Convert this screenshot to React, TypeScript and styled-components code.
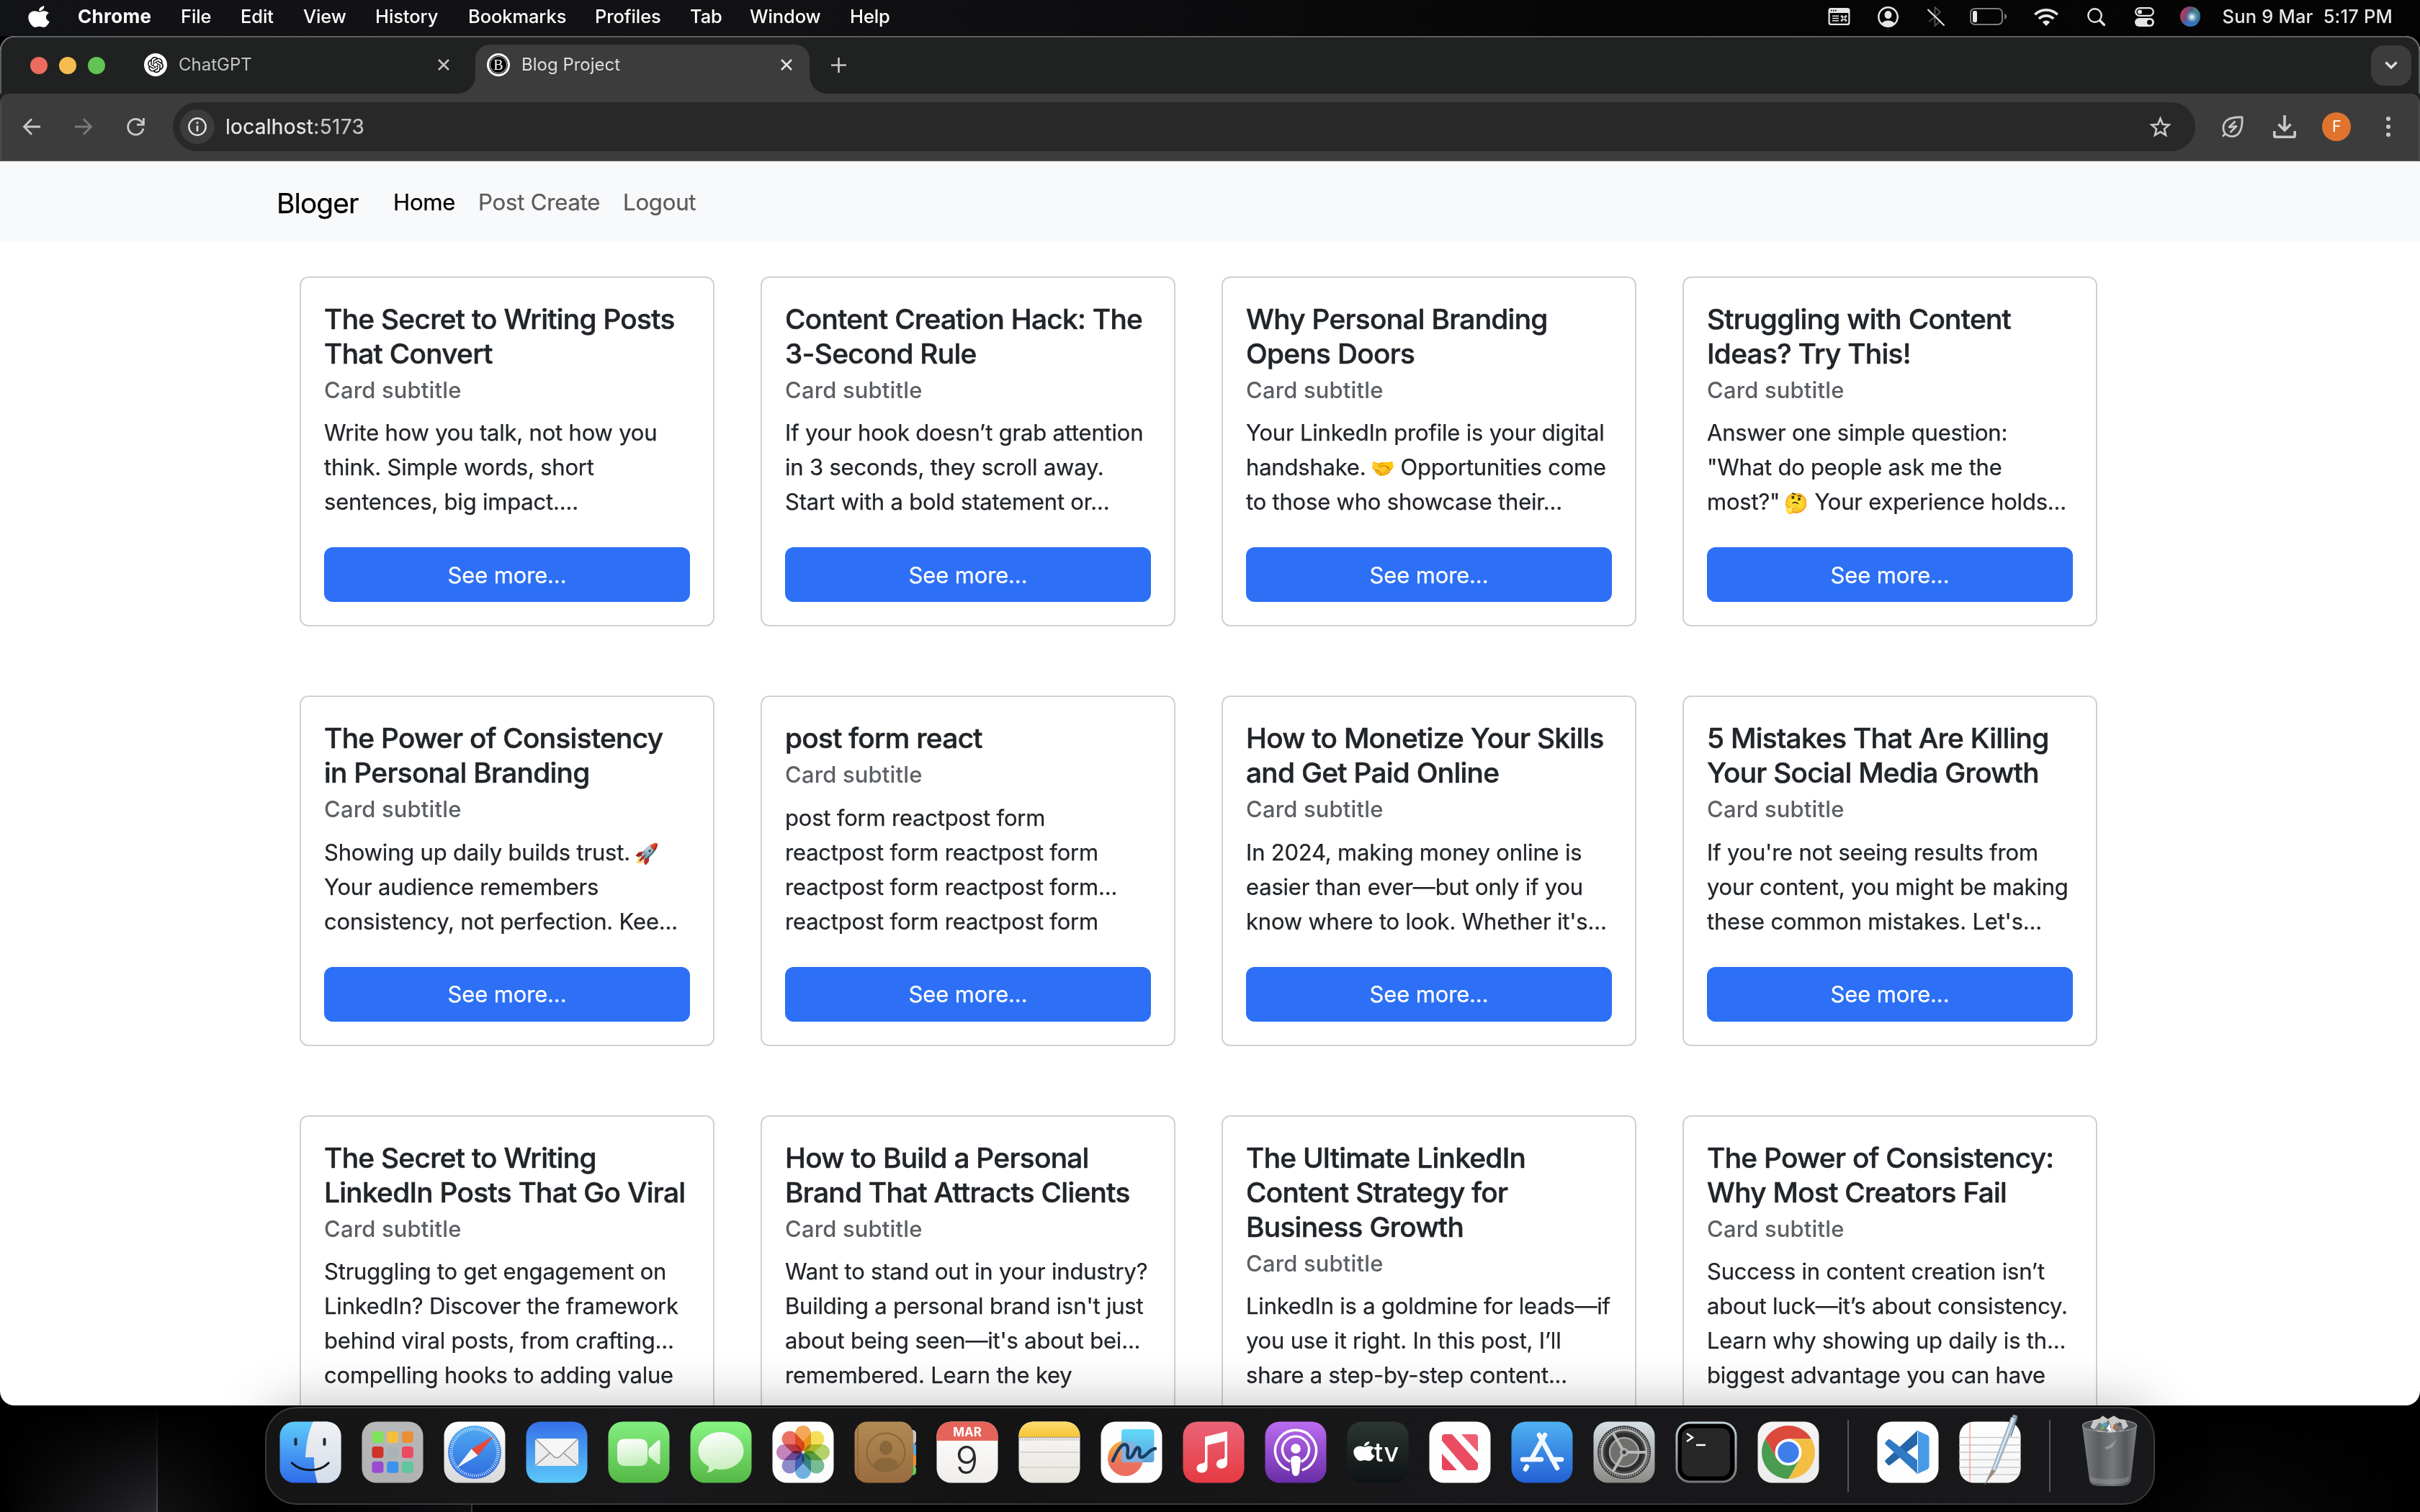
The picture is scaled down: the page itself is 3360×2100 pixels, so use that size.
import React from "react";
import styled, { createGlobalStyle } from "styled-components";
import { FaApple } from "react-icons/fa";
import { SiOpenai } from "react-icons/si";

const GlobalStyle = createGlobalStyle`
  *, *::before, *::after { box-sizing: border-box; }
  body { margin: 0; background: #000; font-family: Inter, "Liberation Sans", sans-serif; }
  h5, h6, p { margin: 0; }
  svg { display: block; flex: none; overflow: visible; }
`;

/* ---------- desktop ---------- */

const Desktop = styled.div`
  width: 3360px;
  height: 2100px;
  overflow: hidden;
  display: flex;
  flex-direction: column;
  background:
    linear-gradient(180deg, #000 0%, rgba(0, 0, 0, 0.75) 28%, rgba(0, 0, 0, 0) 100%) 0 1952px / 3360px 148px no-repeat,
    linear-gradient(#4d4d55, #4d4d55) 217px 1900px / 2px 200px no-repeat,
    linear-gradient(#43434a, #43434a) 654px 1900px / 2px 200px no-repeat,
    linear-gradient(90deg, #000 0, #26262b 217px, #121214 219px, #000 380px, #0b0b0d 560px, #101013 654px, #050506 657px, #000 900px, #000 2900px, #08080a 3100px, #000 3360px) 0 1900px / 3360px 200px no-repeat,
    #000;
`;

/* ---------- menu bar ---------- */

const MenuBar = styled.header`
  flex: none;
  height: 50px;
  display: flex;
  align-items: center;
  padding: 0 38px 4px 39px;
  color: #fff;
  background: linear-gradient(90deg, #121316 0%, #111114 35%, #060607 65%, #040404 100%);
`;
const AppleSlot = styled.div`
  width: 69px;
  display: flex;
`;
const MenuItem = styled.span<{ $w: number; $strong?: boolean }>`
  width: ${(p) => p.$w}px;
  font-size: ${(p) => (p.$strong ? 26 : 25.5)}px;
  font-weight: ${(p) => (p.$strong ? 700 : 500)};
  letter-spacing: ${(p) => (p.$strong ? 0.3 : -0.1)}px;
  line-height: 46px;
  white-space: nowrap;
`;
const StatusArea = styled.div`
  margin-left: auto;
  display: flex;
  align-items: center;
  color: #e6e6e6;
`;
const StatusIcon = styled.span<{ $after: number }>`
  display: flex;
  margin-right: ${(p) => p.$after}px;
`;
const Clock = styled.span`
  display: flex;
  gap: 14px;
  font-size: 25.5px;
  font-weight: 500;
  letter-spacing: 0.18px;
  line-height: 46px;
  white-space: pre;
`;

/* ---------- browser window ---------- */

const Window = styled.main`
  flex: none;
  width: 3360px;
  height: 1902px;
  overflow: hidden;
  display: flex;
  flex-direction: column;
  border-radius: 20px;
  background: #fff;
`;
const TabStrip = styled.div`
  flex: none;
  height: 80px;
  display: flex;
  align-items: center;
  padding: 0 10px 0 40px;
  border: 2px solid #5e5f5f;
  border-bottom: 0;
  border-radius: 20px 20px 0 0;
  background: #202221;
`;
const Lights = styled.div`
  display: flex;
  gap: 16px;
  width: 138px;
`;
const Light = styled.i<{ $c: string }>`
  width: 24px;
  height: 24px;
  border-radius: 50%;
  background: ${(p) => p.$c};
`;
const Tab = styled.div<{ $active?: boolean; $w: number }>`
  position: relative;
  align-self: flex-end;
  width: ${(p) => p.$w}px;
  height: 68px;
  display: flex;
  align-items: center;
  padding: 0 ${(p) => (p.$active ? 24 : 36)}px 12px ${(p) => (p.$active ? 16 : 20)}px;
  border-radius: 20px 20px 0 0;
  background: ${(p) => (p.$active ? "#3c3c3c" : "transparent")};
  color: ${(p) => (p.$active ? "#dedede" : "#c4c5c5")};
  &::before,
  &::after {
    content: "";
    display: ${(p) => (p.$active ? "block" : "none")};
    position: absolute;
    bottom: 0;
    width: 24px;
    height: 24px;
  }
  &::before {
    right: 100%;
    background: radial-gradient(circle at 0 0, transparent 23.5px, #3c3c3c 24px);
  }
  &::after {
    left: 100%;
    background: radial-gradient(circle at 100% 0, transparent 23.5px, #3c3c3c 24px);
  }
`;
const TabTitle = styled.span`
  flex: 1;
  margin-left: 16px;
  font-size: 24px;
  line-height: 32px;
  white-space: nowrap;
`;
const Favicon = styled.span<{ $dark?: boolean }>`
  width: 32px;
  height: 32px;
  border-radius: 50%;
  display: flex;
  align-items: center;
  justify-content: center;
  background: ${(p) => (p.$dark ? "#000" : "#fff")};
  border: ${(p) => (p.$dark ? "3px solid #fff" : "0")};
  box-shadow: ${(p) => (p.$dark ? "inset 0 0 0 1px #000, inset 0 0 0 2px #bbb" : "none")};
  color: ${(p) => (p.$dark ? "#fff" : "#000")};
  font: 20px/1 "Liberation Serif", serif;
`;
const NewTab = styled.span`
  margin-left: 30px;
  margin-bottom: 2px;
`;
const TabSearch = styled.span`
  margin-left: auto;
  width: 56px;
  height: 56px;
  border-radius: 18px;
  background: #3c3c3c;
  display: flex;
  align-items: center;
  justify-content: center;
`;
const ToolbarBack = styled.div`
  flex: none;
  background: #202221;
`;
const Toolbar = styled.div`
  height: 94px;
  display: flex;
  align-items: center;
  padding: 0 37px 0 30px;
  background: #3c3c3c;
  border-radius: 14px 14px 0 0;
  border: 2px solid #4a4a4a;
  border-top: 0;
  color: #c9c9c9;
`;
const NavButtons = styled.div`
  display: flex;
  align-items: center;
  gap: 48px;
  width: 208px;
`;
const Omnibox = styled.div`
  width: 2808px;
  height: 68px;
  border-radius: 34px;
  background: #282828;
  display: flex;
  align-items: center;
  padding: 0 33px 0 10px;
`;
const SiteInfo = styled.span`
  width: 48px;
  height: 48px;
  border-radius: 50%;
  background: #3c3c3c;
  display: flex;
  align-items: center;
  justify-content: center;
`;
const Address = styled.span`
  flex: 1;
  margin-left: 15px;
  font-size: 28px;
  letter-spacing: 0.3px;
  -webkit-text-stroke: 0.25px;
  color: #e6e6e6;
  em { font-style: normal; color: #c4c4c4; }
`;
const ToolbarActions = styled.div`
  flex: 1;
  display: flex;
  align-items: center;
  padding-left: 37px;
`;
const Avatar = styled.span`
  width: 40px;
  height: 40px;
  margin: 0 49px 0 36px;
  border-radius: 50%;
  background: #e0742e;
  color: #fff;
  font: 22px/40px Roboto, sans-serif;
  text-align: center;
`;
const Gap = styled.span<{ $l: number }>`
  margin-left: ${(p) => p.$l}px;
`;

/* ---------- page ---------- */

const Navbar = styled.nav`
  flex: none;
  height: 112px;
  display: flex;
  align-items: center;
  padding: 2px 384px 0;
  background: #f8f9fb;
`;
const Brand = styled.span`
  width: 162px;
  font-size: 38.8px;
  letter-spacing: -0.9px;
  -webkit-text-stroke: 0.25px;
  color: #000;
`;
const NavLink = styled.span<{ $active?: boolean; $w: number }>`
  width: ${(p) => p.$w}px;
  font-size: 31.2px;
  letter-spacing: ${(p) => (p.$active ? -0.3 : -0.25)}px;
  -webkit-text-stroke: 0.25px;
  color: ${(p) => (p.$active ? "#000" : "#5b5b5c")};
`;
const Grid = styled.section`
  flex: 1;
  min-height: 0;
  display: grid;
  grid-template-columns: repeat(4, 576px);
  grid-auto-rows: 486.4px;
  column-gap: 64px;
  row-gap: 96px;
  padding: 48px 416px 0;
`;
const Card = styled.article`
  border: 2px solid #d0d1d2;
  border-radius: 12px;
  padding: 33px 32px 32px;
  display: flex;
  flex-direction: column;
  background: #fff;
  color: #212529;
`;
const CardTitle = styled.h5`
  margin-bottom: 16px;
  font-size: 38.8px;
  font-weight: 500;
  line-height: 48px;
  letter-spacing: -0.7px;
  -webkit-text-stroke: 0.5px;
  span { display: block; white-space: nowrap; }
`;
const CardSubtitle = styled.h6`
  margin: -8px 0 16px;
  font-size: 31px;
  font-weight: 500;
  line-height: 38.4px;
  letter-spacing: 0.15px;
  color: #5c6064;
`;
const CardText = styled.p`
  font-size: 31px;
  line-height: 48px;
  letter-spacing: -0.2px;
  -webkit-text-stroke: 0.25px;
  margin-bottom: 31px;
  flex: 1;
  span { display: block; height: 48px; white-space: nowrap; }
`;
const Emoji = styled.i`
  display: inline-block;
  width: 33px;
  margin-left: -2px;
  font: normal 27px/1 "Noto Color Emoji", sans-serif;
  letter-spacing: 0;
`;
const SeeMore = styled.button`
  flex: none;
  height: 76px;
  padding: 1px 0 0;
  border: 0;
  border-radius: 12px;
  background: #2d70f5;
  color: #fff;
  font: 400 31px/48px Inter, sans-serif;
  letter-spacing: -0.15px;
  -webkit-text-stroke: 0.25px;
`;

/* ---------- dock ---------- */

const DockArea = styled.footer`
  flex: none;
  height: 148px;
  display: flex;
  justify-content: center;
  padding-top: 2px;
`;
const Dock = styled.div`
  position: relative;
  height: 136px;
  display: flex;
  gap: 28px;
  padding: 18px;
  border: 2px solid #3b3b3d;
  border-radius: 44px;
  background: linear-gradient(90deg, #151515, #19191b 20%, #141415 38%, #18181a 60%, #19191b);
  box-shadow: 0 0 74px rgba(0, 0, 0, 0.28);
`;
const DockSlot = styled.div<{ $running?: boolean }>`
  width: 86px;
  display: flex;
  flex-direction: column;
  align-items: center;
  gap: 18px;
  &::after {
    content: "";
    width: 8px;
    height: 8px;
    border-radius: 50%;
    background: ${(p) => (p.$running ? "#8f8f90" : "transparent")};
  }
`;
const DockDivider = styled.i`
  width: 2px;
  height: 100px;
  margin: -2px 11px 0;
  background: #57575a;
`;

/* ---------- dock icons ---------- */

const Tile = ({ id, from, to, children }: { id: string; from: string; to: string; children?: React.ReactNode }) => (
  <svg width="86" height="86" viewBox="0 0 86 86">
    <defs>
      <linearGradient id={id} x1="0" y1="0" x2="0" y2="1">
        <stop offset="0" stopColor={from} />
        <stop offset="1" stopColor={to} />
      </linearGradient>
      <clipPath id={id + "Clip"}>
        <rect x="0.5" y="0.5" width="85" height="85" rx="20" />
      </clipPath>
    </defs>
    <rect x="0.5" y="0.5" width="85" height="85" rx="20" fill={`url(#${id})`} />
    {children}
  </svg>
);

const Finder = () => (
  <Tile id="finder" from="#5ecbfa" to="#2f6bea">
    <defs>
      <linearGradient id="finderFace" x1="0" y1="0" x2="0" y2="1">
        <stop offset="0" stopColor="#f2f2f4" />
        <stop offset="1" stopColor="#d3dce8" />
      </linearGradient>
    </defs>
    <g clipPath="url(#finderClip)">
      <path d="M47 0C40 15 37 32 36 50h12c0 13 1 25 5 36h33V0z" fill="url(#finderFace)" />
    </g>
    <path d="M22.5 25v7M62.5 25v7" stroke="#1d2a3c" strokeWidth="4" strokeLinecap="round" />
    <path d="M17.500 58C30 71 56 71 68 58" fill="none" stroke="#10151d" strokeWidth="3.200" strokeLinecap="round" />
  </Tile>
);
const Launchpad = () => (
  <Tile id="launchpad" from="#b7b8ba" to="#b0b1b3">
    {["#7fe35a", "#f5bf3c", "#ea8f35", "#cf3328", "#a9b3b8", "#ea4b63", "#9a4bd0", "#3a93ee", "#60c6a0"].map((c, i) => (
      <rect key={c} x={14.500 + (i % 3) * 20.700} y={14 + Math.floor(i / 3) * 20.900} width="16" height="16" rx="4" fill={c} />
    ))}
  </Tile>
);
const Safari = () => (
  <Tile id="safari" from="#ffffff" to="#d9d9d9">
    <defs>
      <linearGradient id="safariDial" x1="0" y1="0" x2="0" y2="1">
        <stop offset="0" stopColor="#4fabf0" />
        <stop offset="1" stopColor="#2f6be0" />
      </linearGradient>
    </defs>
    <circle cx="43" cy="43" r="37" fill="url(#safariDial)" />
    <circle cx="43" cy="43" r="32.500" fill="none" stroke="#e4f1fc" strokeWidth="4.500" strokeDasharray="0.9 1.936" />
    <path d="M70 20L47.500 47.500 38.500 38.500z" fill="#e6493b" />
    <path d="M18 65L38.500 38.500l9 9z" fill="#f4f4f4" />
  </Tile>
);
const Mail = () => (
  <Tile id="mail" from="#3570e8" to="#5bc8fa">
    <rect x="13" y="24" width="60" height="38" rx="4" fill="#ececec" />
    <path d="M14 61l23-20M72 61L49 41" stroke="#9b9b9b" strokeWidth="1.600" />
    <path d="M14 25l23 22c4 5 8 5 12 0l23-22" fill="#f6f6f6" stroke="#9b9b9b" strokeWidth="1.600" strokeLinejoin="round" />
  </Tile>
);
const WhiteFade = ({ id }: { id: string }) => (
  <linearGradient id={id} x1="0" y1="0" x2="0.2" y2="1">
    <stop offset="0" stopColor="#fff" />
    <stop offset="1" stopColor="#c9efc0" />
  </linearGradient>
);
const FaceTime = () => (
  <Tile id="facetime" from="#82ee80" to="#56b846">
    <defs><WhiteFade id="ftFade" /></defs>
    <rect x="13" y="24.500" width="42" height="37.500" rx="9" fill="url(#ftFade)" />
    <path d="M57 38l12-11c2-1.500 3.500-.5 3.500 1.500v29c0 2-1.500 3-3.500 1.500L57 49c-1-3-1-8 0-11z" fill="url(#ftFade)" />
  </Tile>
);
const Messages = () => (
  <Tile id="messages" from="#88f583" to="#56b846">
    <defs><WhiteFade id="msgFade" /></defs>
    <path d="M43 15c18 0 31.500 11.500 31.500 26S61 67 43 67c-3 0-6-.3-8.500-1C32 69 28 71 23.500 71c2-2.500 3-5 2.500-8.500C17 58 11.500 50 11.500 41 11.500 26.500 25 15 43 15z" fill="url(#msgFade)" />
  </Tile>
);
const Petal = styled.rect`
  mix-blend-mode: multiply;
`;
const Photos = () => (
  <Tile id="photos" from="#ffffff" to="#fbfbfb">
    {["#f29a3c", "#f3dc3a", "#a9cd52", "#5fb383", "#5aa4e0", "#7b78c4", "#bb6fb0", "#ea5548"].map((c, i) => (
      <Petal key={c} x="32" y="6" width="22" height="35.500" rx="11" fill={c} opacity="0.85" transform={`rotate(${i * 45} 43 43)`} />
    ))}
  </Tile>
);
const Contacts = () => (
  <svg width="86" height="86" viewBox="0 0 86 86">
    <rect x="60" y="12" width="26" height="20" rx="5" fill="#c9c6c0" />
    <rect x="60" y="31" width="26" height="18" rx="3" fill="#4fa9e6" />
    <rect x="60" y="46" width="26" height="17" rx="3" fill="#f08f2e" />
    <rect x="60" y="61" width="26" height="14" rx="5" fill="#63cf5b" />
    <defs>
      <linearGradient id="leather" x1="0" y1="0" x2="0" y2="1">
        <stop offset="0" stopColor="#b08a54" />
        <stop offset="1" stopColor="#9a6c3f" />
      </linearGradient>
    </defs>
    <rect x="0.500" y="0.500" width="81.500" height="85" rx="18" fill="url(#leather)" />
    <path d="M5 6v74" stroke="#8b6438" strokeWidth="1.500" />
    <circle cx="44" cy="43" r="26.500" fill="none" stroke="#8a663b" strokeWidth="2" />
    <ellipse cx="44" cy="37" rx="9" ry="10" fill="#8a663b" />
    <path d="M26 62c2-8 9-11 18-11s16 3 18 11c-10 10-26 10-36 0z" fill="#8a663b" />
  </svg>
);
const Calendar = () => (
  <Tile id="calendar" from="#ffffff" to="#f0eeeb">
    <g clipPath="url(#calendarClip)"><rect width="86" height="27" fill="#e5645a" /></g>
    <text x="43" y="21" textAnchor="middle" fontSize="17" fontWeight="700" fill="#fff">MAR</text>
    <text x="42.500" y="73" textAnchor="middle" fontSize="53" fontWeight="300" fill="#2a2a2c">9</text>
  </Tile>
);
const Notes = () => (
  <Tile id="notes" from="#fbfaf8" to="#e8e5df">
    <g clipPath="url(#notesClip)">
      <defs>
        <linearGradient id="notesTop" x1="0" y1="0" x2="0" y2="1">
          <stop offset="0" stopColor="#fbdc72" />
          <stop offset="1" stopColor="#f6c435" />
        </linearGradient>
      </defs>
      <rect width="86" height="22" fill="url(#notesTop)" />
      <path d="M0 22.500h86" stroke="#a9a7a2" strokeWidth="1.500" />
      <path d="M2 25.500h82" stroke="#b8b6b2" strokeWidth="2.500" strokeDasharray="1.300 1.700" />
      <path d="M0 43h86M0 64h86" stroke="#cfcdca" strokeWidth="1.600" />
    </g>
  </Tile>
);
const Freeform = () => (
  <Tile id="freeform" from="#ffffff" to="#fdfdfd">
    <defs>
      <linearGradient id="ffOrange" x1="0" y1="0" x2="0" y2="1">
        <stop offset="0" stopColor="#f5b13a" />
        <stop offset="0.7" stopColor="#ec6f5e" />
      </linearGradient>
      <linearGradient id="ffBlue" x1="0" y1="0" x2="0" y2="1">
        <stop offset="0" stopColor="#62dafb" />
        <stop offset="1" stopColor="#5aa3da" />
      </linearGradient>
    </defs>
    <circle cx="34.500" cy="51.500" r="24.500" fill="url(#ffOrange)" />
    <rect x="29" y="11" width="45.500" height="46" rx="4" fill="url(#ffBlue)" />
    <path d="M29 28a24.500 24.500 0 0 1 29 29H33a4 4 0 0 1-4-4z" fill="#86aede" />
    <path d="M17 55c6-14 13-26 19-22 5 4-2 18 4 18s8-17 13-14c4 3-2 13 4 13 6 0 10-11 19-12" fill="none" stroke="#173e63" strokeWidth="4.500" strokeLinecap="round" />
  </Tile>
);
const Music = () => (
  <Tile id="music" from="#ea6478" to="#e63a42">
    <path d="M31 21.500l31-7.500V58c0 4.500-3.500 7.500-8 7.500-4 0-7-2.500-7-6 0-4 3-6.500 7-7 3-.4 4.500-1 4.500-3.500V27.500L34.500 33v31c0 4.500-3.500 7.500-8 7.500-4 0-7-2.500-7-6 0-4 3-6.500 7-7 3-.4 4.500-1 4.500-3.500z" fill="#fff" />
  </Tile>
);
const Podcasts = () => (
  <Tile id="podcasts" from="#bb6cf0" to="#6a2da8">
    <g fill="none" stroke="#fff" strokeWidth="3.400" strokeLinecap="round">
      <path d="M33 67.500A28.500 28.500 0 1 1 53 67.500" />
      <path d="M34 55.500A18.500 18.500 0 1 1 52 55.500" />
    </g>
    <circle cx="43" cy="38" r="6.800" fill="#fff" />
    <path d="M36 54c0-4 3-6 7-6s7 2 7 6l-2 17c-.5 3-2.500 5-5 5s-4.500-2-5-5z" fill="#fff" />
  </Tile>
);
const AppleTv = () => (
  <Tile id="appletv" from="#2b3632" to="#0e1213">
    <svg x="9" y="26" width="30" height="31" viewBox="0 0 384 512" preserveAspectRatio="none">
      <FaApple size={512} x={-64} color="#fff" />
    </svg>
    <text x="38" y="56" fontSize="36" fontWeight="500" letterSpacing="0.5" fill="#fff">tv</text>
  </Tile>
);
const News = () => (
  <Tile id="news" from="#ffffff" to="#fdfdfd">
    <path d="M18 22a4 4 0 0 1 4-4h10l36 40v6a4 4 0 0 1-4 4H53L18 27z" fill="#ea4d62" />
    <path d="M45 18h19a4 4 0 0 1 4 4v21z" fill="#ee5f73" />
    <path d="M18 45l21 23H22a4 4 0 0 1-4-4z" fill="#e8435a" />
  </Tile>
);
const AppStore = () => (
  <Tile id="appstore" from="#4fb2f2" to="#2260d4">
    <g stroke="#f3f8ff" strokeWidth="6.500" strokeLinecap="round">
      <path d="M39 19l25 46" />
      <path d="M47 19L28 53" />
      <path d="M16 53h26M57 53h13" />
      <path d="M22 63l-2 3.500" />
    </g>
  </Tile>
);
const Settings = () => (
  <Tile id="settings" from="#d6e0e6" to="#8d8a86">
    <circle cx="43" cy="43" r="37" fill="#383a3b" />
    <circle cx="43" cy="43" r="31" fill="#4a4c4c" stroke="#b3b5b5" strokeWidth="2.500" />
    <circle cx="43" cy="43" r="34" fill="none" stroke="#a5a7a7" strokeWidth="3" strokeDasharray="1.500 1.500" />
    <circle cx="43" cy="43" r="23.500" fill="#4b4c4b" stroke="#2b2c2c" strokeWidth="7" />
    <circle cx="43" cy="43" r="20" fill="#6f706c" stroke="#a3a4a1" strokeWidth="2.500" />
    <path d="M43 43h30M43 43L28 17M43 43L28 69" stroke="#b7b9b9" strokeWidth="4" />
    <circle cx="43" cy="43" r="5" fill="#8b8c8b" stroke="#c3c4c4" strokeWidth="1.500" />
    <circle cx="43" cy="43" r="2" fill="#222" />
  </Tile>
);
const Terminal = () => (
  <Tile id="terminal" from="#c3d3dd" to="#77787a">
    <rect x="3.500" y="3.500" width="79" height="79" rx="17" fill="#000" />
    <rect x="9" y="9.500" width="67" height="67" rx="12" fill="#272728" />
    <path d="M16 17l8 5.500-8 5.500" fill="none" stroke="#fff" strokeWidth="2.500" />
    <path d="M29 33h13" stroke="#fff" strokeWidth="2.500" />
  </Tile>
);
const Chrome = () => (
  <Tile id="chrome" from="#f5f5f5" to="#ececec">
    <path d="M11 24.500A37 37 0 0 1 75 24.500L43 24.500 43 43 27 52.250z" fill="#db4a3c" />
    <path d="M75 24.500A37 37 0 0 1 43 80L59 52.250 43 43V24.500z" fill="#f4be43" />
    <path d="M43 80A37 37 0 0 1 11 24.500L27 52.250 43 43l16 9.250z" fill="#4a9c50" />
    <circle cx="43" cy="43" r="18.500" fill="#fff" />
    <circle cx="43" cy="43" r="14.700" fill="#3f7de8" />
  </Tile>
);
const VsCode = () => (
  <Tile id="vscode" from="#ffffff" to="#fdfdfd">
    <path d="M56 13v19L18.500 60.500c-1.200 1-2.500.8-3.500-.2L12 57c-1-1-1-2.300 0-3.300z" fill="#2565a8" />
    <path d="M56 73V54L18.500 25.500c-1.200-1-2.500-.8-3.500.2L12 29c-1 1-1 2.300 0 3.300z" fill="#3079c4" />
    <path d="M54 13.500c1-.8 2-.8 3-.3l13 6c1.500.8 2.500 2 2.500 4v39.600c0 2-1 3.200-2.500 4l-13 6c-1 .5-2 .5-3-.3 1.500.8 3-.2 3-2V15.500c0-1.800-1.500-2.800-3-2z" fill="#459be8" />
  </Tile>
);
const TextEdit = () => (
  <Tile id="textedit" from="#ffffff" to="#f4f4f4">
    <path d="M0 22.500h86M0 33h86M0 43h86M0 53.500h86M0 64h86M2 74h82" stroke="#c9c9cb" strokeWidth="1.600" />
    <path d="M15 1v84" stroke="#f2a6a2" strokeWidth="1.500" />
    <path d="M77-9l5 1.500L53 66l-19 24 14-27z" fill="#000" opacity="0.120" />
    <path d="M72-6l8 2-29 73-6-2z" fill="#9db4c6" />
    <path d="M74-5l3 .8L49 68l-2-.6z" fill="#dfe9f0" />
    <path d="M45 67l6 2-16 20z" fill="#9b8c7c" />
    <path d="M75-9.500l6 1.700-1.300 4.600-6.300-1.700z" fill="#88a0b2" />
    <path d="M81-6l-9 27" stroke="#5f7688" strokeWidth="1.500" />
  </Tile>
);
const Trash = () => (
  <svg width="86" height="86" viewBox="0 0 86 86">
    <defs>
      <linearGradient id="bin" x1="0" x2="1" y1="0" y2="0">
        <stop offset="0" stopColor="#7e8183" />
        <stop offset="0.3" stopColor="#5b5e60" />
        <stop offset="0.55" stopColor="#77797b" />
        <stop offset="0.8" stopColor="#55585a" />
        <stop offset="1" stopColor="#808385" />
      </linearGradient>
    </defs>
    <path d="M5 6h76l-8.500 76c-.6 5-7 8-15 8H30c-8 0-14.500-3-15-8z" fill="url(#bin)" />
    <ellipse cx="43" cy="6" rx="37.500" ry="8.500" fill="#505456" stroke="#8b8e90" strokeWidth="1.500" />
    <g transform="translate(6 4) scale(0.86 0.78)">
      <path d="M12 6l5-13 10-3 5-5 8 6 10-6 9 6 9 1 5 12-12 9-18 2-18-2z" fill="#c9c9c7" />
      <path d="M18 10l9-14 6 8 8-12 5 14-7 8zM48 6l6-9 9 5 2 8-10 5z" fill="#77797a" />
      <path d="M30 0l6-4 4 5-7 5z" fill="#4aa7c9" />
      <path d="M50 0l6 2-3 8-5-2z" fill="#b56a45" />
      <path d="M58-4l5 3-2 5-5-2z" fill="#40577e" />
      <path d="M31 1l4 6-7 5z" fill="#6bb36a" />
      <path d="M38 8l5-9 3 14z" fill="#fff" />
    </g>
    <path d="M36 36c8-2 12-6 16-12-1 9-5 14-14 15z" fill="#a8abad" opacity="0.600" />
    <path d="M16 76c6 6 48 6 54 0l-1 7c-5 6-47 6-52 0z" fill="#9ca0a2" opacity="0.450" />
  </svg>
);

const DOCK: [string, () => React.ReactElement, boolean?][] = [
  ["finder", Finder, true],
  ["launchpad", Launchpad],
  ["safari", Safari],
  ["mail", Mail],
  ["facetime", FaceTime],
  ["messages", Messages],
  ["photos", Photos],
  ["contacts", Contacts],
  ["calendar", Calendar],
  ["notes", Notes],
  ["freeform", Freeform],
  ["music", Music],
  ["podcasts", Podcasts],
  ["tv", AppleTv],
  ["news", News],
  ["appstore", AppStore],
  ["settings", Settings],
  ["terminal", Terminal],
  ["chrome", Chrome, true],
];

/* ---------- small icons ---------- */

const Cross = ({ color }: { color: string }) => (
  <svg width="16" height="16" viewBox="0 0 16 16" stroke={color} strokeWidth="2.600">
    <path d="M1 1l14 14M15 1L1 15" />
  </svg>
);
const Arrow = ({ flip, color }: { flip?: boolean; color: string }) => (
  <svg width="24" height="24" viewBox="0 0 24 24" fill="none" stroke={color} strokeWidth="2.800">
    <path d={flip ? "M0 12h22M12 1.200L22.500 12 12 22.800" : "M24 12H2M12 1.200L1.500 12 12 22.800"} />
  </svg>
);

const MENUS: [string, number][] = [
  ["Chrome", 143],
  ["File", 83],
  ["Edit", 87],
  ["View", 100],
  ["History", 129],
  ["Bookmarks", 176],
  ["Profiles", 132],
  ["Tab", 83],
  ["Window", 139],
  ["Help", 70],
];

const handshake = <Emoji>🤝</Emoji>;
const thinking = <Emoji>🤔</Emoji>;
const rocket = <Emoji>🚀</Emoji>;

const POSTS: { title: string[]; text: React.ReactNode[] }[] = [
  {
    title: ["The Secret to Writing Posts", "That Convert"],
    text: ["Write how you talk, not how you", "think. Simple words, short", "sentences, big impact...."],
  },
  {
    title: ["Content Creation Hack: The", "3-Second Rule"],
    text: ["If your hook doesn’t grab attention", "in 3 seconds, they scroll away.", "Start with a bold statement or..."],
  },
  {
    title: ["Why Personal Branding", "Opens Doors"],
    text: ["Your LinkedIn profile is your digital", <>handshake. {handshake} Opportunities come</>, "to those who showcase their..."],
  },
  {
    title: ["Struggling with Content", "Ideas? Try This!"],
    text: ["Answer one simple question:", '"What do people ask me the', <>most?" {thinking} Your experience holds...</>],
  },
  {
    title: ["The Power of Consistency", "in Personal Branding"],
    text: [<>Showing up daily builds trust. {rocket}</>, "Your audience remembers", "consistency, not perfection. Kee..."],
  },
  {
    title: ["post form react"],
    text: ["post form reactpost form", "reactpost form reactpost form", "reactpost form reactpost form...", "reactpost form reactpost form"],
  },
  {
    title: ["How to Monetize Your Skills", "and Get Paid Online"],
    text: ["In 2024, making money online is", "easier than ever—but only if you", "know where to look. Whether it's..."],
  },
  {
    title: ["5 Mistakes That Are Killing", "Your Social Media Growth"],
    text: ["If you're not seeing results from", "your content, you might be making", "these common mistakes. Let's..."],
  },
  {
    title: ["The Secret to Writing", "LinkedIn Posts That Go Viral"],
    text: ["Struggling to get engagement on", "LinkedIn? Discover the framework", "behind viral posts, from crafting...", "compelling hooks to adding value"],
  },
  {
    title: ["How to Build a Personal", "Brand That Attracts Clients"],
    text: ["Want to stand out in your industry?", "Building a personal brand isn't just", "about being seen—it's about bei...", "remembered. Learn the key"],
  },
  {
    title: ["The Ultimate LinkedIn", "Content Strategy for", "Business Growth"],
    text: ["LinkedIn is a goldmine for leads—if", "you use it right. In this post, I’ll", "share a step-by-step content..."],
  },
  {
    title: ["The Power of Consistency:", "Why Most Creators Fail"],
    text: ["Success in content creation isn’t", "about luck—it’s about consistency.", "Learn why showing up daily is th...", "biggest advantage you can have"],
  },
];

export default function App() {
  return (
    <Desktop>
      <GlobalStyle />
      <MenuBar>
        <AppleSlot>
          <svg width="30" height="34" viewBox="0 0 384 512" preserveAspectRatio="none">
            <FaApple size={512} x={-64} />
          </svg>
        </AppleSlot>
        {MENUS.map(([label, w], i) => (
          <MenuItem key={label} $w={w} $strong={i === 0}>{label}</MenuItem>
        ))}
        <StatusArea>
          <StatusIcon $after={38}>
            <svg width="31" height="24" viewBox="0 0 31 24">
              <path fillRule="evenodd" d="M4 0h23a3.500 3.500 0 0 1 3.500 3.500v17A3.500 3.500 0 0 1 27 24H4A3.500 3.500 0 0 1 .5 20.500v-17A3.500 3.500 0 0 1 4 0zM2.700 7v13A1.700 1.700 0 0 0 4.400 21.700h22.200A1.700 1.700 0 0 0 28.300 20V7zM4 2.800v1.600h1.700V2.800zM7 2.800v1.600h1.700V2.800zM10 2.800v1.600h1.700V2.800z" fill="#e6e6e6" />
              <path d="M6 11.200h9M6 14.500h9M6 17.800h9" stroke="#e6e6e6" strokeWidth="1.600" />
              <path d="M20.200 12.700h3.600v3.600h-3.600zM20.200 12.700h-1a1 1 0 1 1 1-1zM23.800 12.700h1a1 1 0 1 0-1-1zM20.200 16.300h-1a1 1 0 1 0 1 1zM23.800 16.300h1a1 1 0 1 1-1 1z" fill="none" stroke="#e6e6e6" strokeWidth="1.200" />
            </svg>
          </StatusIcon>
          <StatusIcon $after={40}>
            <svg width="29" height="29" viewBox="0 0 29 29">
              <defs><clipPath id="userClip"><circle cx="14.500" cy="14.500" r="13" /></clipPath></defs>
              <circle cx="14.500" cy="14.500" r="13.200" fill="none" stroke="#e6e6e6" strokeWidth="2.400" />
              <ellipse cx="14.500" cy="11.500" rx="4.900" ry="5.600" fill="#e6e6e6" />
              <ellipse cx="14.500" cy="26" rx="10" ry="6.500" fill="#e6e6e6" clipPath="url(#userClip)" />
            </svg>
          </StatusIcon>
          <StatusIcon $after={35}>
            <svg width="24" height="30" viewBox="0 0 24 30" fill="none" strokeLinecap="round">
              <path d="M3 8.500l15 12.500-7.500 7V2l7.500 7L3 21.500" stroke="#4d4d4d" strokeWidth="2" strokeLinejoin="round" />
              <path d="M1 5.500L23 27" stroke="#e6e6e6" strokeWidth="2" />
            </svg>
          </StatusIcon>
          <StatusIcon $after={37}>
            <svg width="52" height="24" viewBox="0 0 52 24">
              <rect x="1" y="1" width="44" height="22" rx="6" fill="none" stroke="#7d7d7d" strokeWidth="2" />
              <rect x="4" y="4" width="6" height="16" rx="2.500" fill="#e6e6e6" />
              <path d="M48.200 8v8c2-.6 3-2.200 3-4s-1-3.400-3-4z" fill="#7d7d7d" />
            </svg>
          </StatusIcon>
          <StatusIcon $after={40}>
            <svg width="34" height="25" viewBox="0 0 34 25">
              <g fill="none" stroke="#e6e6e6" strokeWidth="3.700">
                <path d="M1.300 9.300a22.200 22.200 0 0 1 31.400 0" />
                <path d="M6.900 15a14.300 14.300 0 0 1 20.200 0" />
              </g>
              <path d="M17 25l-5.200-5.300a7.400 7.400 0 0 1 10.400 0z" fill="#e6e6e6" />
            </svg>
          </StatusIcon>
          <StatusIcon $after={41}>
            <svg width="25" height="25" viewBox="0 0 25 25" fill="none" stroke="#e6e6e6" strokeLinecap="round">
              <circle cx="10.500" cy="10.500" r="9.200" strokeWidth="2.400" />
              <path d="M17.500 17.500l6 6" strokeWidth="3.200" />
            </svg>
          </StatusIcon>
          <StatusIcon $after={36}>
            <svg width="27" height="27" viewBox="0 0 27 27">
              <rect x="1.200" y="1.200" width="24.600" height="10.600" rx="5.300" fill="none" stroke="#e6e6e6" strokeWidth="2.200" />
              <circle cx="7" cy="6.500" r="3" fill="#e6e6e6" />
              <rect x="0" y="15" width="27" height="12" rx="6" fill="#e6e6e6" />
              <circle cx="20.500" cy="21" r="3.500" fill="#080808" />
            </svg>
          </StatusIcon>
          <StatusIcon $after={31}>
            <svg width="28" height="28" viewBox="0 0 28 28">
              <defs>
                <linearGradient id="siriRing" x1="0" y1="0.300" x2="1" y2="0.700">
                  <stop offset="0" stopColor="#d0315f" />
                  <stop offset="0.400" stopColor="#57567a" />
                  <stop offset="0.700" stopColor="#3f8f86" />
                  <stop offset="1" stopColor="#2f62b0" />
                </linearGradient>
                <radialGradient id="siriGlow" cx="0.580" cy="0.520" r="0.380">
                  <stop offset="0" stopColor="#fff" />
                  <stop offset="0.250" stopColor="#cfe0f5" stopOpacity="0.850" />
                  <stop offset="0.700" stopColor="#5b8fd0" stopOpacity="0.300" />
                  <stop offset="1" stopColor="#333" stopOpacity="0" />
                </radialGradient>
              </defs>
              <circle cx="14" cy="14" r="14" fill="url(#siriRing)" />
              <path d="M4 22a14 14 0 0 0 20 2c-4-5-12-6-20-2z" fill="#2f6fd0" opacity="0.800" />
              <circle cx="14" cy="14" r="14" fill="url(#siriGlow)" />
            </svg>
          </StatusIcon>
          <Clock>
            <span>Sun 9 Mar</span>
            <span>5:17 PM</span>
          </Clock>
        </StatusArea>
      </MenuBar>

      <Window>
        <TabStrip>
          <Lights>
            <Light $c="#ed6a5f" />
            <Light $c="#f5bd4f" />
            <Light $c="#61c454" />
          </Lights>
          <Tab $w={480}>
            <Favicon><SiOpenai size={22} /></Favicon>
            <TabTitle>ChatGPT</TabTitle>
            <Cross color="#c4c5c5" />
          </Tab>
          <Tab $active $w={464}>
            <Favicon $dark>B</Favicon>
            <TabTitle>Blog Project</TabTitle>
            <Cross color="#e3e3e3" />
          </Tab>
          <NewTab>
            <svg width="21" height="21" viewBox="0 0 21 21" stroke="#c7c7c7" strokeWidth="2.600">
              <path d="M10.500 0v21M0 10.500h21" />
            </svg>
          </NewTab>
          <TabSearch>
            <svg width="18" height="12" viewBox="0 0 18 12" fill="none" stroke="#e3e3e3" strokeWidth="3.200">
              <path d="M1.500 1.500L9 9l7.500-7.500" />
            </svg>
          </TabSearch>
        </TabStrip>
        <ToolbarBack>
          <Toolbar>
            <NavButtons>
              <Arrow color="#c9c9c9" />
              <Arrow flip color="#7b7b7b" />
              <svg width="25" height="25" viewBox="0 0 25 25" fill="none" stroke="#c9c9c9" strokeWidth="2.800">
                <path d="M23 14.500a10.800 10.800 0 1 1-2-8.800l2 2.800" />
                <path d="M23.400 0v9.200H14" />
              </svg>
            </NavButtons>
            <Omnibox>
              <SiteInfo>
                <svg width="26" height="26" viewBox="0 0 26 26">
                  <circle cx="13" cy="13" r="11.700" fill="none" stroke="#e3e3e3" strokeWidth="2.400" />
                  <path d="M13 11.500v8M13 6.300v2.800" stroke="#e3e3e3" strokeWidth="2.600" />
                </svg>
              </SiteInfo>
              <Address>localhost<em>:5173</em></Address>
              <svg width="31" height="30" viewBox="0 0 31 30" fill="none" stroke="#c9c9c9" strokeWidth="2.600">
                <path d="M15.500 3.500l3.300 8.200 8.800.7-6.700 5.700 2.100 8.700-7.500-4.700L8 26.800l2.100-8.700-6.700-5.700 8.800-.7z" />
              </svg>
            </Omnibox>
            <ToolbarActions>
              <svg width="30" height="30" viewBox="0 0 30 30" fill="none" stroke="#c9c9c9">
                <path d="M4.500 24.500C.5 19 1 10.500 7 6 12.500 1.800 20 1.500 28 1.800c.5 8 .2 16-4.500 22C19 29.500 10 30 4.500 24.500zM1 28.500l4-4" strokeWidth="2.800" />
                <path d="M18.500 7.500L9.500 16l11-2-9 9" strokeWidth="2.600" strokeLinejoin="bevel" />
              </svg>
              <Gap $l={41}>
                <svg width="32" height="32" viewBox="0 0 32 32" fill="none" stroke="#c9c9c9" strokeWidth="3.600">
                  <path d="M16 0v21M7.500 12.500L16 21l8.500-8.500M1.800 22v6.500c0 1 .7 1.700 1.700 1.700h25c1 0 1.700-.7 1.700-1.700V22" />
                </svg>
              </Gap>
              <Avatar>F</Avatar>
              <svg width="6" height="28" viewBox="0 0 6 28" fill="#c9c9c9">
                <circle cx="3" cy="3" r="3" />
                <circle cx="3" cy="14" r="3" />
                <circle cx="3" cy="25" r="3" />
              </svg>
            </ToolbarActions>
          </Toolbar>
        </ToolbarBack>

        <Navbar>
          <Brand>Bloger</Brand>
          <NavLink $active $w={118}>Home</NavLink>
          <NavLink $w={201}>Post Create</NavLink>
          <NavLink $w={120}>Logout</NavLink>
        </Navbar>
        <Grid>
          {POSTS.map((post) => (
            <Card key={post.title.join(" ")}>
              <CardTitle>
                {post.title.map((line) => (
                  <span key={line}>{line}</span>
                ))}
              </CardTitle>
              <CardSubtitle>Card subtitle</CardSubtitle>
              <CardText>
                {post.text.map((line, i) => (
                  <span key={i}>{line}</span>
                ))}
              </CardText>
              <SeeMore>See more...</SeeMore>
            </Card>
          ))}
        </Grid>
      </Window>

      <DockArea>
        <Dock>
          {DOCK.map(([name, Icon, running]) => (
            <DockSlot key={name} $running={running}><Icon /></DockSlot>
          ))}
          <DockDivider />
          <DockSlot $running><VsCode /></DockSlot>
          <DockSlot><TextEdit /></DockSlot>
          <DockDivider />
          <DockSlot><Trash /></DockSlot>
        </Dock>
      </DockArea>
    </Desktop>
  );
}
